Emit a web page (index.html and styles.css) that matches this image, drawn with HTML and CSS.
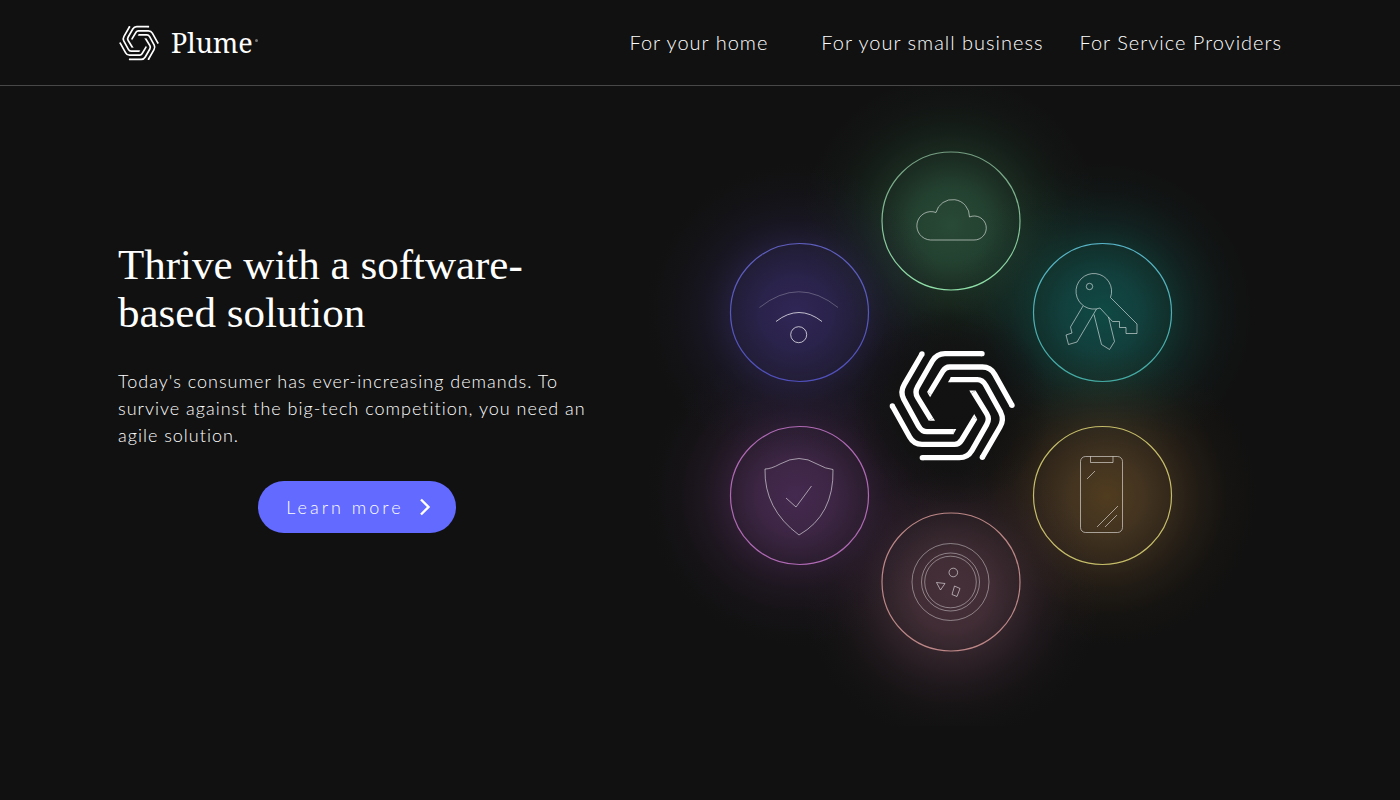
FILE: index.html
```
<!DOCTYPE html>
<html lang="en">
<head>
<meta charset="utf-8">
<meta name="viewport" content="width=device-width, initial-scale=1">
<title>Plume</title>
<link rel="stylesheet" href="styles.css">
</head>
<body>
<header class="site-header">
  <a class="brand" href="#" aria-label="Plume home">
    <svg class="brand-mark" viewBox="48 55 397 344" aria-hidden="true">
      <g id="mark" class="mark">
        <g id="mark-half">
          <path d="M156 72L103 163Q90 185 101 207L145 287Q155 305 171 305H251"/>
          <path d="M336 71H225Q200 71 187 93L143 170Q133 187 143 203L183 268"/>
          <path d="M67 228L119 321Q131 343 156 343H254Q267 343 275 330L315 264"/>
          <circle cx="156" cy="72" r="8"/><circle cx="336" cy="71" r="8"/><circle cx="67" cy="228" r="8"/>
          <polygon points="250,297 259,297 250,313"/>
          <polygon points="176,272.200 190,263.800 195,272.200"/>
          <polygon points="321.900,268.100 308.100,259.900 312.700,252.200"/>
        </g>
        <use href="#mark-half" transform="rotate(180 246.500 227)"/>
      </g>
    </svg>
    <span class="brand-name">Plume</span><span class="brand-dot"></span>
  </a>
  <nav class="site-nav" aria-label="Main">
    <a class="nav-home" href="#">For your home</a>
    <a class="nav-business" href="#">For your small business</a>
    <a href="#">For Service Providers</a>
  </nav>
</header>
<main class="hero">
  <section class="hero-copy">
    <h1>Thrive with a software-<br>based solution</h1>
    <p>Today's consumer has ever-increasing demands. To survive against the big-tech competition, you need an agile solution.</p>
    <a class="cta" href="#">Learn more
      <svg class="cta-arrow" viewBox="0 0 12 18" aria-hidden="true"><path d="M2 1.500L9.500 9L2 16.500"/></svg>
    </a>
  </section>
  <svg class="hub" viewBox="620 86 660 640" role="img" aria-label="Connected home services">
    <defs>
      <radialGradient id="g-green"><stop offset="0" stop-color="#2f5a40" stop-opacity=".78"/><stop offset=".25" stop-color="#2d5a40" stop-opacity=".66"/><stop offset=".46" stop-color="#285038" stop-opacity=".42"/><stop offset=".62" stop-color="#245036" stop-opacity=".22"/><stop offset=".8" stop-color="#225035" stop-opacity=".07"/><stop offset="1" stop-color="#205035" stop-opacity="0"/></radialGradient>
      <radialGradient id="g-teal"><stop offset="0" stop-color="#0f5650" stop-opacity=".82"/><stop offset=".25" stop-color="#125450" stop-opacity=".7"/><stop offset=".46" stop-color="#125048" stop-opacity=".48"/><stop offset=".62" stop-color="#124c46" stop-opacity=".26"/><stop offset=".8" stop-color="#12504a" stop-opacity=".08"/><stop offset="1" stop-color="#12504a" stop-opacity="0"/></radialGradient>
      <radialGradient id="g-gold"><stop offset="0" stop-color="#604722" stop-opacity=".8"/><stop offset=".25" stop-color="#5c4528" stop-opacity=".66"/><stop offset=".46" stop-color="#543e24" stop-opacity=".46"/><stop offset=".62" stop-color="#503a20" stop-opacity=".24"/><stop offset=".8" stop-color="#503818" stop-opacity=".07"/><stop offset="1" stop-color="#503818" stop-opacity="0"/></radialGradient>
      <radialGradient id="g-rose"><stop offset="0" stop-color="#583a48" stop-opacity=".74"/><stop offset=".25" stop-color="#583a46" stop-opacity=".68"/><stop offset=".46" stop-color="#503642" stop-opacity=".46"/><stop offset=".62" stop-color="#4c3040" stop-opacity=".24"/><stop offset=".8" stop-color="#4c3040" stop-opacity=".07"/><stop offset="1" stop-color="#4c3040" stop-opacity="0"/></radialGradient>
      <radialGradient id="g-plum"><stop offset="0" stop-color="#51305f" stop-opacity=".8"/><stop offset=".25" stop-color="#502f5b" stop-opacity=".7"/><stop offset=".46" stop-color="#482a50" stop-opacity=".48"/><stop offset=".62" stop-color="#402548" stop-opacity=".26"/><stop offset=".8" stop-color="#402548" stop-opacity=".08"/><stop offset="1" stop-color="#402548" stop-opacity="0"/></radialGradient>
      <radialGradient id="g-blue"><stop offset="0" stop-color="#382b66" stop-opacity=".82"/><stop offset=".25" stop-color="#342a62" stop-opacity=".7"/><stop offset=".46" stop-color="#302858" stop-opacity=".5"/><stop offset=".62" stop-color="#282248" stop-opacity=".28"/><stop offset=".8" stop-color="#282248" stop-opacity=".1"/><stop offset="1" stop-color="#282248" stop-opacity="0"/></radialGradient>
      <radialGradient id="g-center"><stop offset="0" stop-color="#121212"/><stop offset=".5" stop-color="#121212" stop-opacity=".7"/><stop offset="1" stop-color="#121212" stop-opacity="0"/></radialGradient>
      <linearGradient id="s-green" x2="0" y2="1"><stop stop-color="#749d80"/><stop offset="1" stop-color="#8fe0a8"/></linearGradient>
      <linearGradient id="s-teal" x2="0" y2="1"><stop stop-color="#58b5c8"/><stop offset="1" stop-color="#43aaa2"/></linearGradient>
      <linearGradient id="s-blue" x2="0" y2="1"><stop stop-color="#5f5fc0"/><stop offset="1" stop-color="#5050bd"/></linearGradient>
    </defs>
    <circle cx="951" cy="225" r="150" fill="url(#g-green)"/>
    <circle cx="1102" cy="313" r="150" fill="url(#g-teal)"/>
    <circle cx="1107" cy="496" r="150" fill="url(#g-gold)"/>
    <circle cx="952" cy="592" r="150" fill="url(#g-rose)"/>
    <circle cx="796" cy="496" r="150" fill="url(#g-plum)"/>
    <circle cx="796" cy="313" r="150" fill="url(#g-blue)"/>
    <circle cx="951" cy="406" r="100" fill="url(#g-center)"/>
    <g class="rings">
      <circle cx="951" cy="221" r="69" stroke="url(#s-green)"/>
      <circle cx="1102.500" cy="312.500" r="69" stroke="url(#s-teal)"/>
      <circle cx="1102.500" cy="495.500" r="69" stroke="#c5bd69"/>
      <circle cx="951" cy="582" r="69" stroke="#bd8787"/>
      <circle cx="799.500" cy="495.500" r="69" stroke="#b06ab5"/>
      <circle cx="799.500" cy="312.500" r="69" stroke="url(#s-blue)"/>
    </g>
    <g class="line-art">
      <path d="M930.500 240A14.200 14.200 0 1 1 936 212.500A17 17 0 0 1 969.500 217A12 12 0 1 1 974 240Z"/>
      <g>
        <path d="M1110.500 297.500A17.800 17.800 0 1 0 1100 308L1112.500 321.500H1119.500V327.500H1126V333.500H1137V324Z"/>
        <circle cx="1089.500" cy="286.500" r="3.200"/>
        <path d="M1083 306L1070.500 327L1072 333L1066 335L1068.500 344.500L1077 342L1096.500 309"/>
        <path d="M1094 314.500L1101.500 344.500L1109.500 349.500L1114.500 341.500L1108.500 317"/>
      </g>
      <g>
        <rect x="1080.500" y="456.500" width="42" height="76" rx="5"/>
        <path d="M1090.500 456.500V462.500H1113V456.500M1087 479L1095 471M1097 527L1118 506M1105 527L1117 515"/>
      </g>
      <g>
        <circle class="dim" cx="950.500" cy="582" r="38.500"/>
        <circle class="dim" cx="950.500" cy="582" r="29"/>
        <circle class="dim" cx="950.500" cy="582" r="25.800"/>
        <circle cx="953.300" cy="572.500" r="4.300"/>
        <path d="M936.500 582.500L945 583.500L940.500 590ZM954.500 586L960 588.500L957 596.500L952 594.500Z"/>
      </g>
      <path d="M765 469Q771 469 780 464Q790 458.500 799 458.500Q808 458.500 817 464Q826 469 833 469.500Q834 515 799 535Q764 509 765 469ZM786 498L796 507L811.500 486"/>
      <g>
        <path class="faint" d="M759.500 307.500Q799 276 838 307.500"/>
        <path class="bright" d="M776 321.500Q799 303.500 822 321.500"/>
        <circle class="bright" cx="798.700" cy="334.700" r="8"/>
      </g>
    </g>
    <svg x="870" y="330" width="160" height="150" viewBox="0 0 480 450"><use href="#mark"/></svg>
  </svg>
</main>
</body>
</html>
```

FILE: styles.css
```
* { box-sizing: border-box; }

body {
  margin: 0;
  min-height: 100vh;
  background: #111;
  color: #fff;
  font-family: Lato, "Open Sans", sans-serif;
  font-weight: 300;
}

a { color: inherit; text-decoration: none; }

.site-header {
  display: flex;
  justify-content: space-between;
  align-items: center;
  min-height: 86px;
  padding: 0 118px;
  border-bottom: 1px solid #484848;
}

.brand { display: flex; align-items: center; }
.brand-mark { width: 42px; height: 36px; margin-right: 11px; }
.brand-name { font: 400 27px/40px "Noto Serif", "Liberation Serif", serif; }
.brand-dot { width: 3px; height: 3px; margin: 0 0 4px 2px; border-radius: 50%; background: #777; }

.mark path { fill: none; stroke: #fff; stroke-width: 16; }
.mark circle, .mark polygon { fill: #fff; }

.site-nav {
  display: flex;
  align-items: center;
  padding-bottom: 2px;
  font-size: 20px;
  line-height: 28px;
  letter-spacing: 1px;
}
.nav-home { margin-right: 53px; }
.nav-business { margin-right: 36px; }

.hero {
  display: grid;
  grid-template-columns: minmax(0, 478px) minmax(0, 660px);
  justify-content: space-between;
  padding: 0 120px 0 118px;
}

.hero-copy {
  display: flex;
  flex-direction: column;
  padding-top: 155px;
}

h1 {
  margin: 0;
  font: 400 43px/48px "Liberation Serif", serif;
  white-space: nowrap;
}

.hero-copy p {
  margin: 31px 0 32px;
  font-size: 18px;
  line-height: 27px;
  letter-spacing: 1px;
}

.cta {
  display: flex;
  align-items: center;
  align-self: center;
  gap: 14px;
  height: 52px;
  padding: 0 24px 0 28px;
  border-radius: 26px;
  background: #636aff;
  font-size: 18px;
  letter-spacing: 3px;
}
.cta-arrow { width: 14px; height: 18px; }
.cta-arrow path { fill: none; stroke: #fff; stroke-width: 2.4; }

.hub { display: block; width: 100%; height: auto; }
.rings circle { fill: none; stroke-width: 1.2; }
.line-art { fill: none; stroke: #fff; stroke-opacity: .54; stroke-width: 1; }
.dim { stroke-opacity: .4; }
.faint { stroke-opacity: .25; }
.bright { stroke-opacity: .7; }
```
